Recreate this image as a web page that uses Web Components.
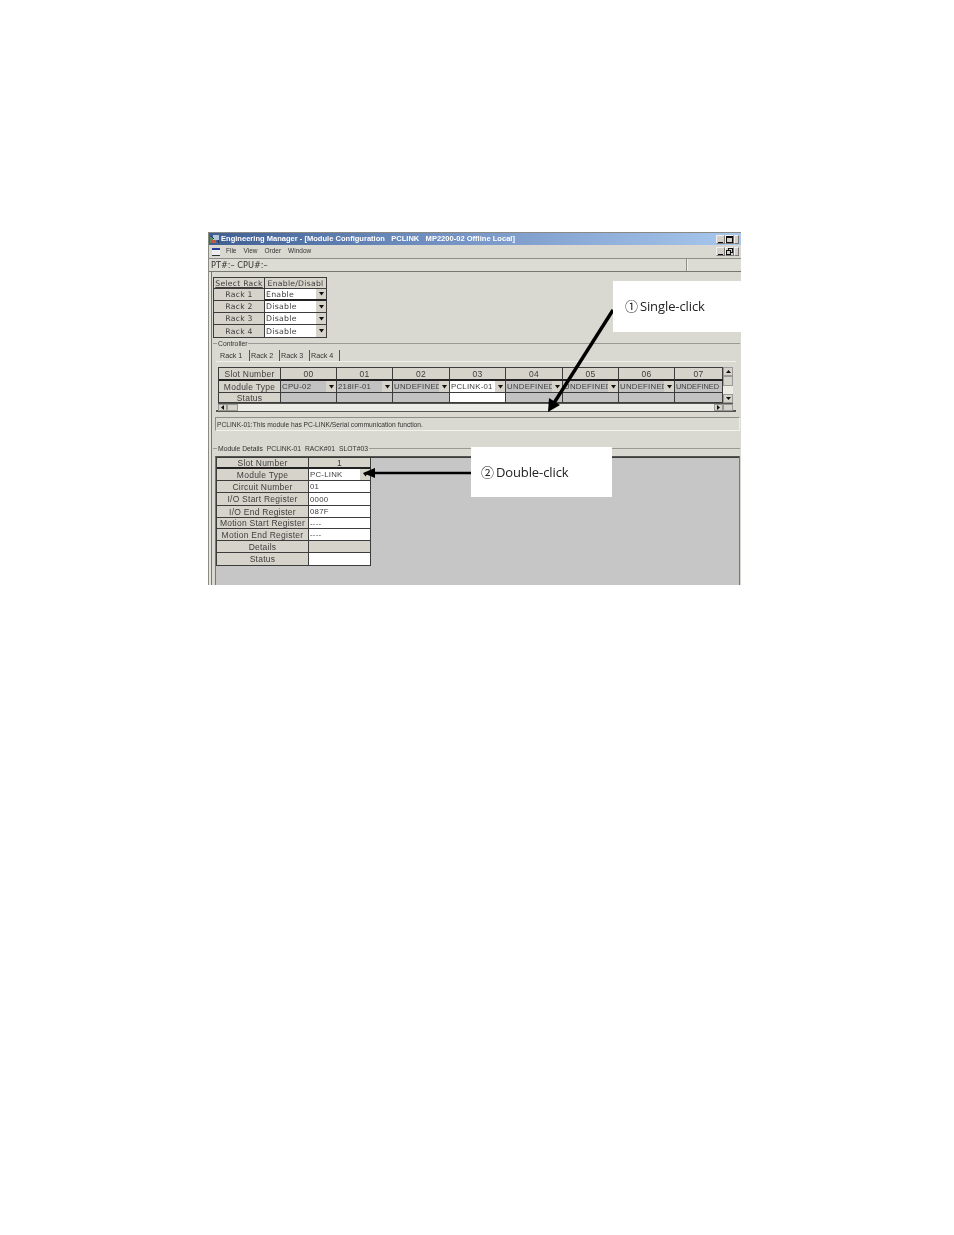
<!DOCTYPE html>
<html>
<head>
<meta charset="utf-8">
<title>Module Configuration</title>
<style>
  html, body { margin: 0; background: #fff; }
</style>
</head>
<body>
<app-page>
  <em-window>
    <em-titlebar>Engineering Manager - [Module Configuration   PCLINK   MP2200-02 Offline Local]</em-titlebar>
    <em-menubar></em-menubar>
    <em-status>PT#:– CPU#:–</em-status>

    <ui-table class="rack" cols="51px 62px" rows="11px 12px 12px 12px 13px" style="margin:5px 0 0 4px;width:114px">
      <ui-cell kind="head" class="s"><u>Select Rack</u></ui-cell><ui-cell kind="head" class="s">Enable/Disabl</ui-cell>
      <ui-cell kind="head" class="s">Rack 1</ui-cell><ui-cell kind="combo" class="t">Enable</ui-cell>
      <ui-cell kind="head" class="s">Rack 2</ui-cell><ui-cell kind="combo">Disable</ui-cell>
      <ui-cell kind="head" class="s">Rack 3</ui-cell><ui-cell kind="combo">Disable</ui-cell>
      <ui-cell kind="head" class="s">Rack 4</ui-cell><ui-cell kind="combo">Disable</ui-cell>
    </ui-table>

    <group-box label="Controller" style="margin-top:1px;height:73px">
      <rack-tabs></rack-tabs>
      <slot-grid>
        <ui-table cols="62px 56px 56px 57px 56px 57px 56px 56px 48px" rows="13px 12px 10px">
          <ui-cell kind="head" class="t">Slot Number</ui-cell><ui-cell kind="head" class="t">00</ui-cell><ui-cell kind="head" class="t">01</ui-cell><ui-cell kind="head" class="t">02</ui-cell><ui-cell kind="head" class="t">03</ui-cell><ui-cell kind="head" class="t">04</ui-cell><ui-cell kind="head" class="t">05</ui-cell><ui-cell kind="head" class="t">06</ui-cell><ui-cell kind="head" class="t">07</ui-cell>
          <ui-cell kind="head">Module Type</ui-cell><ui-cell kind="gcombo">CPU-02</ui-cell><ui-cell kind="gcombo">218IF-01</ui-cell><ui-cell kind="gcombo">UNDEFINED</ui-cell><ui-cell kind="combo">PCLINK-01</ui-cell><ui-cell kind="gcombo">UNDEFINED</ui-cell><ui-cell kind="gcombo">UNDEFINED</ui-cell><ui-cell kind="gcombo">UNDEFINED</ui-cell><ui-cell kind="gray" style="font-size:7.400px;letter-spacing:0">UNDEFINED</ui-cell>
          <ui-cell kind="head">Status</ui-cell><ui-cell kind="gray"></ui-cell><ui-cell kind="gray"></ui-cell><ui-cell kind="gray"></ui-cell><ui-cell kind="white"></ui-cell><ui-cell kind="gray"></ui-cell><ui-cell kind="gray"></ui-cell><ui-cell kind="gray"></ui-cell><ui-cell kind="gray"></ui-cell>
        </ui-table>
      </slot-grid>
    </group-box>

    <msg-bar>PCLINK-01:This module has PC-LINK/Serial communication function.</msg-bar>

    <group-box label="Module Details  PCLINK-01  RACK#01  SLOT#03" style="margin-top:13px;flex:1">
      <detail-panel>
        <ui-table cols="92px 62px" rows="11px 12px 12px 13px 12px 11px 12px 12px 13px">
          <ui-cell kind="head" class="t">Slot Number</ui-cell><ui-cell kind="head" class="t">1</ui-cell>
          <ui-cell kind="head">Module Type</ui-cell><ui-cell kind="combo">PC-LINK</ui-cell>
          <ui-cell kind="head">Circuit Number</ui-cell><ui-cell kind="white">01</ui-cell>
          <ui-cell kind="head">I/O Start Register</ui-cell><ui-cell kind="white">0000</ui-cell>
          <ui-cell kind="head">I/O End Register</ui-cell><ui-cell kind="white">087F</ui-cell>
          <ui-cell kind="head">Motion Start Register</ui-cell><ui-cell kind="white">----</ui-cell>
          <ui-cell kind="head">Motion End Register</ui-cell><ui-cell kind="white">----</ui-cell>
          <ui-cell kind="head">Details</ui-cell><ui-cell kind="head"></ui-cell>
          <ui-cell kind="head">Status</ui-cell><ui-cell kind="white"></ui-cell>
        </ui-table>
      </detail-panel>
    </group-box>

    <call-out mark="①" style="left:405px;top:48px;width:128px;height:51px;--pad:12px;padding-bottom:2px">Single-click</call-out>
    <call-out mark="②" style="left:263px;top:214px;width:141px;height:50px;--pad:10px;padding-bottom:1px">Double-click</call-out>
    <arrow-layer></arrow-layer>
  </em-window>
</app-page>

<script>
function define(name, css, markup, extra) {
  class El extends HTMLElement {
    constructor() {
      super();
      this.attachShadow({ mode: "open" }).innerHTML =
        "<style>" + css + "</style>" + (typeof markup === "function" ? markup(this) : markup);
    }
    connectedCallback() {
      if (extra) extra(this);
    }
  }
  customElements.define(name, El);
}

const drop = `<svg width="5" height="4" viewBox="0 0 5 4"><path d="M0 0h5L2.500 3.500z" fill="#111"/></svg>`;
const btnCss = `
  .b { display: flex; margin-right: 2px; }
  .b span { width: 9px; height: 9px; box-sizing: border-box; background: #d4d0c8; border: 1px solid #777; border-top-color: #eee; border-left-color: #eee; display: flex; align-items: flex-end; justify-content: center; }
  .b span:last-child { width: 5px; }
  .b svg { display: block; margin: 0; }
`;
const minBtn = `<span><svg width="5" height="3"><rect width="5" height="1" y="2" fill="#111"/></svg></span>`;

define("app-page", `
  :host { display: block; height: 1235px; box-sizing: border-box; padding: 232px 0 0 208px; overflow: hidden;
    font-family: "DejaVu Sans", sans-serif; color: #3a3a3a; }
`, `<slot></slot>`);

define("em-window", `
  :host { display: flex; flex-direction: column; position: relative; width: 533px; height: 353px; box-sizing: border-box; padding-left: 1px;
    background: #d9d9d1; border-top: 1px solid #8a8a84; filter: blur(.35px);
    box-shadow: inset 1px 0 #8b8b85, inset 3px 0 #e6e6de, inset 4px 0 #77776f; }
`, `<slot></slot>`);

define("em-titlebar", `
  :host { display: flex; align-items: center; height: 12px; flex: none; gap: 1px;
    background: linear-gradient(90deg, #3f5f93 0%, #6a89bb 35%, #a9c8ee 100%); }
  .t { flex: 1; padding-bottom: 2px; font: bold 7.550px "Liberation Sans", sans-serif; color: #fff; white-space: pre; overflow: hidden; }
  .i { flex: none; margin-left: 1px; }
  ${btnCss}
`, `<svg class="i" width="10" height="10" viewBox="0 0 10 10"><rect x="0" y="3" width="6" height="6" fill="#5f8c5c"/><rect x="3" y="1" width="6" height="5" fill="#b5c7dd"/><rect x="1" y="6" width="4" height="3" fill="#c4553f"/><path d="M1 2l3 3M8 6l1 3" stroke="#234" /></svg>
  <div class="t"><slot></slot></div>
  <div class="b">${minBtn}<span><svg width="7" height="7"><rect x=".5" y=".5" width="6" height="6" fill="none" stroke="#111"/><rect width="7" height="2" fill="#111"/></svg></span><span></span></div>`);

define("em-menubar", `
  :host { display: flex; align-items: center; height: 13px; flex: none; background: #d9d9d1; font: 6.500px "Liberation Sans", sans-serif; color: #333; }
  .i { margin: 0 6px 0 3px; }
  .m span { white-space: nowrap; }
  .m { display: flex; gap: 7px; flex: 1; padding-bottom: 2px; }
  ${btnCss}
`, `<svg class="i" width="8" height="8" viewBox="0 0 8 8"><rect width="8" height="8" fill="#eee"/><rect width="8" height="2" fill="#2b3f9e"/><rect y="7" width="8" height="1" fill="#333"/></svg>
  <div class="m"><span>File</span><span>View</span><span>Order</span><span>Window</span></div>
  <div class="b">${minBtn}<span><svg width="7" height="7"><rect x="2.500" y=".5" width="4" height="4" fill="none" stroke="#111"/><rect x=".5" y="2.500" width="4" height="4" fill="#d4d0c8" stroke="#111"/></svg></span><span></span></div>`);

define("em-status", `
  :host { display: flex; height: 14px; flex: none; box-sizing: border-box; border-top: 1px solid #8e8e88; border-bottom: 1px solid #77776f; background: #dcdcd4; }
  .a { width: 478px; border-right: 1px solid #8e8e88; padding-left: 2px; font-size: 8.200px; line-height: 12px; color: #333; box-sizing: border-box; }
  .b { flex: 1; border-left: 1px solid #eee; }
`, `<div class="a"><slot></slot></div><div class="b"></div>`);

define("ui-table", `
  :host { display: grid; box-sizing: border-box; flex: none; border-top: 1px solid #3c3c3c; border-left: 1px solid #3c3c3c; }
`, `<slot></slot>`, (el) => {
  el.style.gridTemplateColumns = el.getAttribute("cols");
  el.style.gridTemplateRows = el.getAttribute("rows");
});

define("ui-cell", `
  :host { display: flex; align-items: center; box-sizing: border-box; min-width: 0; overflow: hidden; white-space: nowrap;
    border-right: 1px solid #3c3c3c; border-bottom: 1px solid #3c3c3c; font-size: 7.800px; letter-spacing: .25px; color: #3e3e3e; }
  :host(.t) { border-bottom-width: 2px; border-bottom-color: #222; }
  :host([kind=head]) { background: #d6d3ca; font-size: 8.500px; text-align: center; }
  :host([kind=head].s) { font-size: 7.700px; }
  :host([kind=white]), :host([kind=combo]) { background: #fff; padding-left: 1px; }
  :host([kind=gray]), :host([kind=gcombo]) { background: #c2c2c2; padding-left: 1px; }
  .x { flex: 1; overflow: hidden; min-width: 0; }
  .d { flex: none; width: 10px; align-self: stretch; display: none; align-items: center; justify-content: center; background: #d6d3ca; }
  :host([kind=combo]) .d, :host([kind=gcombo]) .d { display: flex; }
`, `<div class="x"><slot></slot></div><div class="d">${drop}</div>`);

define("group-box", `
  :host { display: flex; flex-direction: column; flex: none; min-height: 0; font-family: "Liberation Sans", sans-serif; }
  .h { display: flex; align-items: center; gap: 1px; height: 8px; font-size: 6.800px; color: #333; white-space: pre; margin-left: 4px; flex: none; }
  .h i { height: 1px; background: #9a9a94; }
  .h .a { width: 4px; }
  .h .b { flex: 1; margin-right: 1px; }
  .c { flex: 1; min-height: 0; display: flex; flex-direction: column; }
`, (el) => `<div class="h"><i class="a"></i><span>${el.getAttribute("label")}</span><i class="b"></i></div><div class="c"><slot></slot></div>`);

define("rack-tabs", `
  :host { display: flex; height: 11px; flex: none; margin: 3px 0 0 11px; font: 7.200px "Liberation Sans", sans-serif; color: #333; }
  span { width: 30px; line-height: 11px; white-space: nowrap; box-sizing: border-box; border-right: 1px solid #555; }
  span + span { padding-left: 1px; }
  span:first-child { width: 29px; line-height: 9px; }
`, `<span>Rack 1</span><span>Rack 2</span><span>Rack 3</span><span>Rack 4</span>`);

define("slot-grid", `
  :host { display: flex; flex-direction: column; flex: none; width: 520px; height: 51px; box-sizing: border-box; margin: 0 0 0 7px; padding: 5px 3px 0 2px;
    border-top: 1px solid #f0f0ea; border-bottom: 2px solid #55554f; background: #d9d9d1; }
  .top { display: flex; height: 36px; flex: none; }
  .v { width: 10px; flex: none; display: flex; flex-direction: column; background: #e8e8e2; }
  .v i { display: flex; align-items: center; justify-content: center; height: 9px; background: #d6d3ca; border: 1px solid #999; box-sizing: border-box; }
  .h { display: flex; height: 8px; background: #ecece6; border-top: 1px solid #55554f; box-sizing: border-box; }
  .h i { display: flex; align-items: center; justify-content: center; width: 9px; background: #d6d3ca; border: 1px solid #999; box-sizing: border-box; }
  .h .s { flex: 1; background: none; border: 0; }
  svg { display: block; }
`, `<div class="top"><slot></slot><div class="v"><i><svg width="5" height="3"><path d="M0 3h5L2.500 0z" fill="#111"/></svg></i><i style="height:10px"></i><i style="flex:1;border:0;background:#ecebe4"></i><i><svg width="5" height="3"><path d="M0 0h5L2.500 3z" fill="#111"/></svg></i></div></div>
  <div class="h"><i><svg width="3" height="5"><path d="M3 0v5L0 2.500z" fill="#111"/></svg></i><i style="width:11px"></i><i class="s"></i><i><svg width="3" height="5"><path d="M0 0v5L3 2.500z" fill="#111"/></svg></i><i style="width:10px"></i></div>`);

define("msg-bar", `
  :host { display: block; flex: none; height: 14px; box-sizing: border-box; margin: 5px 1px 0 6px; padding-left: 1px; border: 1px solid #8e8e88; border-right-color: #f2f2ec; border-bottom-color: #f2f2ec;
    font: 6.700px/13px "Liberation Sans", sans-serif; color: #333; white-space: nowrap; overflow: hidden; }
`, `<slot></slot>`);

define("detail-panel", `
  :host { display: block; flex: 1; min-height: 0; box-sizing: border-box; margin: 4px 1px 0 6px; background: #c6c6c6; border-top: 1px solid #55554f; border-left: 1px solid #77776f; border-right: 1px solid #77776f; }
`, `<slot></slot>`);

define("call-out", `
  :host { display: flex; align-items: center; position: absolute; box-sizing: border-box; padding-left: var(--pad); background: #fff; color: #222;
    font: 13px "Open Sans", "Liberation Sans", sans-serif; letter-spacing: -.1px; white-space: nowrap; z-index: 3; }
  .m { font: 13px "Noto Sans CJK JP", sans-serif; margin-right: 2px; }
`, (el) => `<span class="m">${el.getAttribute("mark")}</span><slot></slot>`);

define("arrow-layer", `
  :host { display: block; position: absolute; inset: -1px 0 0 0; pointer-events: none; z-index: 2; }
  svg { display: block; }
`, `<svg width="533" height="353" viewBox="0 0 533 353">
  <path d="M405 78 346 171" stroke="#000" stroke-width="3.400" fill="none"/>
  <path d="M340 180 341 166 352 173z" fill="#000"/>
  <path d="M165 241h98" stroke="#000" stroke-width="2.400" fill="none"/>
  <path d="M155 241 167 236v10z" fill="#000"/>
</svg>`);
</script>
</body>
</html>
